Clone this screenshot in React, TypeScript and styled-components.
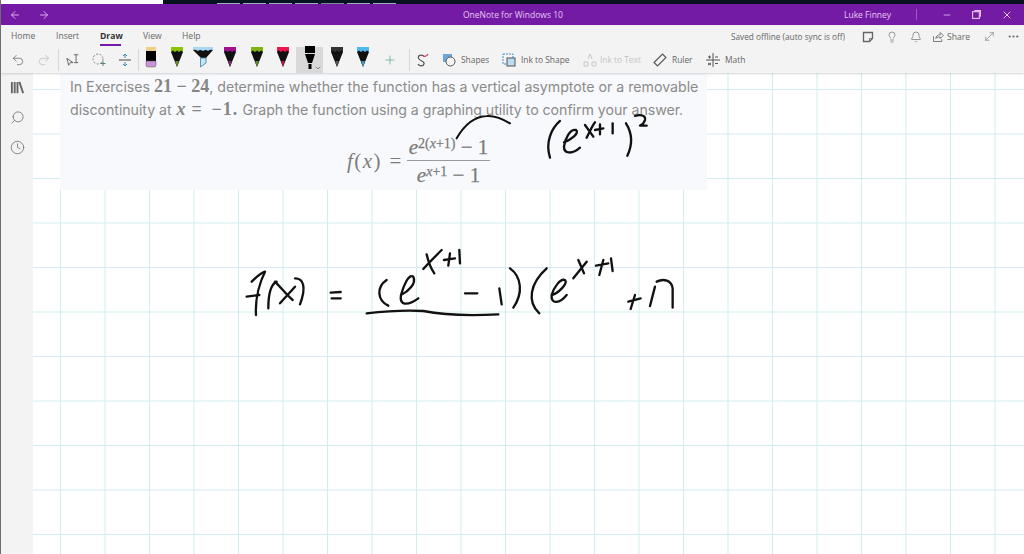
import React from "react";
import styled, { createGlobalStyle } from "styled-components";
import { ArrowLeft, ArrowRight, Undo2, Redo2, Plus, Minus, X, Lightbulb, Bell, Search, Clock, MoveDiagonal, Ellipsis, ChevronDown } from "lucide-react";

const Global = createGlobalStyle`
  html, body { margin: 0; padding: 0; background: #fff; }
  body { font-family: "Open Sans", "Liberation Sans", sans-serif; overflow: hidden; }
  #root { width: 1024px; height: 554px; }
`;
const Page = styled.div`
  width: 1024px; height: 554px; display: flex; flex-direction: column; overflow: hidden;
  border-left: 1px solid #6e6e6e; box-sizing: border-box;
`;
const TopStrip = styled.div`
  height: 4px; flex: none; display: flex; background: #fff;
`;
const DesktopBand = styled.div`
  margin-left: 162px; flex: 1; background: #06131f; display: flex; gap: 3px; padding-left: 54px;
`;
const DesktopTab = styled.span<{ $on?: boolean }>`
  width: 23px; height: 1px; margin-top: 3px; background: ${p => (p.$on ? "#7d8794" : "#9fb0c0")};
`;
const TitleBar = styled.div`
  height: 21px; flex: none; background: #741ba6; display: flex; align-items: center; color: #e6c9f2;
  font-size: 8.5px; position: relative;
`;
const NavArrows = styled.div`
  display: flex; gap: 17px; padding-left: 8px; width: 462px; box-sizing: border-box; color: #d9a9ee;
`;
const AppTitle = styled.div`
  width: 381px; white-space: nowrap;
`;
const UserName = styled.div`
  width: 72px; white-space: nowrap;
`;
const WinDivider = styled.span`
  width: 1px; height: 11px; background: #9a5cc0;
`;
const WinButtons = styled.div`
  display: flex; margin-left: 25px; gap: 20px; color: #e3c1f0; align-items: center;
`;
const Ribbon = styled.div`
  flex: none; height: 48px; background: #f3f3f3; box-shadow: 0 1px 2px rgba(0,0,0,.16); position: relative; z-index: 3;
  display: flex; flex-direction: column;
`;
const TabRow = styled.div`
  height: 21px; display: flex; align-items: flex-start; padding-left: 10px; position: relative;
`;
const Tab = styled.div<{ $active?: boolean; $w: number }>`
  width: ${p => p.$w}px; font-size: 8.6px; line-height: 11px; padding-top: 6px; height: 21px; box-sizing: border-box;
  color: ${p => (p.$active ? "#333" : "#666")}; font-weight: ${p => (p.$active ? 700 : 400)}; position: relative;
  white-space: nowrap;
  &::after {
    content: ""; position: absolute; left: 0; bottom: 0; width: 21px; height: 2px;
    background: ${p => (p.$active ? "#741ba6" : "transparent")};
  }
`;
const RightTools = styled.div`
  margin-left: auto; display: flex; align-items: center; color: #666; font-size: 8.6px; height: 21px; padding-top: 1px;
`;
const SavedLabel = styled.span`
  width: 131px; white-space: nowrap; font-size: 8.25px;
`;
const RightIcon = styled.span<{ $w: number }>`
  width: ${p => p.$w}px; display: flex; justify-content: flex-start; align-items: center; gap: 3px;
`;
const ToolRow = styled.div`
  height: 27px; display: flex; align-items: center; padding-left: 6px;
`;
const Slot = styled.div<{ $w: number; $selected?: boolean; $muted?: boolean }>`
  width: ${p => p.$w}px; height: 26px; flex: none; display: flex; align-items: center; justify-content: center;
  background: ${p => (p.$selected ? "#d9d9d9" : "transparent")}; position: relative;
  color: ${p => (p.$muted ? "#bdbdbd" : "#666")};
`;
const Divider = styled.span`
  width: 1px; height: 22px; background: #d6d6d6; flex: none;
`;
const Labeled = styled.div<{ $w: number; $gap?: number; $muted?: boolean }>`
  width: ${p => p.$w}px; flex: none; display: flex; align-items: center; gap: ${p => p.$gap ?? 5}px; font-size: 8.4px; white-space: nowrap;
  color: ${p => (p.$muted ? "#c4c4c4" : "#666")};
`;
const ChevronBadge = styled.span`
  position: absolute; right: 1px; bottom: 1px; display: flex; color: #555;
`;
const PenSvg = styled.svg`
  margin-bottom: 4px;
`;
const Main = styled.div`
  flex: 1; display: flex; min-height: 0;
`;
const Sidebar = styled.div`
  width: 32px; flex: none; background: #f3f3f3; display: flex; flex-direction: column; align-items: center;
  gap: 15px; padding-top: 7px; color: #666; box-sizing: border-box; z-index: 2;
`;
const MirrorSearch = styled(Search)`
  transform: scaleX(-1);
`;
const Canvas = styled.div`
  flex: 1; position: relative; overflow: hidden;
  background-color: #fff;
  background-image:
    linear-gradient(to right, #d3ecf1 1px, transparent 1px),
    linear-gradient(to bottom, #d3ecf1 1px, transparent 1px);
  background-size: 44.5px 44.5px;
  background-position: 27px 16px;
`;
const Problem = styled.div`
  position: absolute; left: 27px; top: 0; width: 647px; height: 117px; background: #f8f9fc;
  color: #8b8b8b; font-family: Inter, Roboto, sans-serif; font-size: 14.2px; box-sizing: border-box; padding: 2px 0 0 10px;
`;
const Line = styled.div<{ $spacing?: string }>`
  line-height: 23px; height: 23px; white-space: nowrap; letter-spacing: ${p => p.$spacing ?? "0"};
`;
const M = styled.span`
  font-family: "Liberation Serif", serif; font-size: 18px; font-weight: 700; color: #858585;
`;
const EqualsRun = styled(M)`
  word-spacing: 3px; letter-spacing: 1.1px; margin-left: 2px;
`;
const MI = styled(M)`
  font-style: italic; margin-left: 1px;
`;
const Formula = styled.div`
  display: flex; align-items: center; gap: 3px; margin-top: 14px; padding-left: 277px;
  font-family: "Liberation Serif", serif; font-size: 21px; color: #7c7c7c; white-space: nowrap;
`;
const Lhs = styled.span`
  letter-spacing: 1.4px; word-spacing: 1px;
`;
const Fraction = styled.div`
  display: flex; flex-direction: column; align-items: center; margin-left: 1px; -webkit-text-stroke: 0.25px #7c7c7c;
`;
const Numer = styled.div`
  padding: 0 2px 1px; border-bottom: 1px solid #9a9a9a; line-height: 24px; white-space: nowrap;
`;
const Denom = styled.div`
  padding-top: 2px; line-height: 24px; white-space: nowrap;
`;
const Sup = styled.sup`
  font-size: 14px; line-height: 0; vertical-align: 6px;
`;
const Ink = styled.svg`
  position: absolute; left: -33px; top: -73px; width: 1024px; height: 554px; pointer-events: none;
  fill: none; stroke: #111; stroke-linecap: round; stroke-linejoin: round;
`;

function Pen({ cap, tip, wide, flat }: { cap: string; tip: string; wide?: boolean; flat?: boolean }) {
  if (flat) {
    return (
      <PenSvg width="12" height="21" viewBox="0 0 12 21">
        <rect x="1" y="0" width="10" height="4" fill={cap} />
        <rect x="1" y="4" width="10" height="11" fill="#000" />
        <path d="M1 14h10v4q0 2-2 2H3q-2 0-2-2z" fill={tip} stroke="#555" strokeWidth=".5" />
      </PenSvg>
    );
  }
  if (wide) {
    return (
      <PenSvg width="20" height="21" viewBox="0 0 20 21">
        <path d="M0 0h20v3l-7 8v5l-5 2v-7L0 3z" fill="#111" />
        <path d="M0 0h20v3q-3-1-5 1-2-2-5 0-3-2-5 0-3-2-5-1z" fill={cap} />
        <path d="M7.500 11h5.500v5l-5.500 4z" fill="#c6e6f7" stroke="#3d7ea8" strokeWidth=".8" />
      </PenSvg>
    );
  }
  return (
    <PenSvg width="12" height="21" viewBox="0 0 12 21">
      <path d="M0 0h12v5L8 15l-2 5-2-5L0 5z" fill="#111" />
      <path d="M0 0h12v5l-2-1.500-2 1.500-2-1.500-2 1.500-2-1.500-2 1.500z" fill={cap} />
      <path d="M4.200 14h3.600L6 20z" fill={tip} />
    </PenSvg>
  );
}
const SelectedPen = () => (
  <PenSvg width="12" height="24" viewBox="0 0 12 24">
    <path d="M1 0h10v7H1zM1 8h10L8 17H4z" fill="#000" />
    <path d="M4.500 18h3v5h-3z" fill="#000" />
  </PenSvg>
);
const Sv = ({ w = 14, h = 14, children }: { w?: number; h?: number; children: React.ReactNode }) => (
  <svg width={w} height={h} viewBox="0 0 16 16" fill="none" stroke="currentColor" strokeWidth="1.1">{children}</svg>
);

export default function App() {
  return (
    <>
      <Global />
      <Page>
        <TopStrip>
          <DesktopBand>
            {[0, 1, 2, 3, 4, 5, 6].map(i => <DesktopTab key={i} $on={i === 4} />)}
          </DesktopBand>
        </TopStrip>
        <TitleBar>
          <NavArrows>
            <ArrowLeft size={12} />
            <ArrowRight size={12} />
          </NavArrows>
          <AppTitle>OneNote for Windows 10</AppTitle>
          <UserName>Luke Finney</UserName>
          <WinDivider />
          <WinButtons>
            <Minus size={10} />
            <Sv w={9} h={9}><rect x="1" y="3" width="12" height="12" strokeWidth="2" /><path d="M4 1h11v11" strokeWidth="2" /></Sv>
            <X size={12} />
          </WinButtons>
        </TitleBar>
        <Ribbon>
          <TabRow>
            <Tab $w={45}>Home</Tab>
            <Tab $w={44}>Insert</Tab>
            <Tab $w={43} $active>Draw</Tab>
            <Tab $w={39}>View</Tab>
            <Tab $w={60}>Help</Tab>
            <RightTools>
              <SavedLabel>Saved offline (auto sync is off)</SavedLabel>
              <RightIcon $w={24}><Sv w={12} h={12}><path d="M2 2h12v8l-4 4H2z" strokeWidth="1.8" /><path d="M10 14v-4h4" /></Sv></RightIcon>
              <RightIcon $w={24}><Lightbulb size={12} strokeWidth={1.3} /></RightIcon>
              <RightIcon $w={22}><Bell size={12} strokeWidth={1.3} /></RightIcon>
              <RightIcon $w={51}>
                <Sv w={12} h={12}><path d="M2 7v7h11v-3M5 10c0-3 3-5 6-5V2l4 4-4 4V8c-2 0-4 0-6 2z" /></Sv>
                Share
              </RightIcon>
              <RightIcon $w={24}><MoveDiagonal size={13} strokeWidth={1} /></RightIcon>
              <RightIcon $w={17}><Ellipsis size={13} /></RightIcon>
            </RightTools>
          </TabRow>
          <ToolRow>
            <Slot $w={22}><Undo2 size={14} strokeWidth={1.3} /></Slot>
            <Slot $w={29} $muted><Redo2 size={14} strokeWidth={1.3} /></Slot>
            <Divider />
            <Slot $w={27}>
              <Sv w={16} h={14}><path d="M1 6l2 8 2-3 3 0z" /><path d="M9 2h5M11.500 2v9M9 11h5" /></Sv>
            </Slot>
            <Slot $w={26}>
              <svg width="16" height="14" viewBox="0 0 16 14" fill="none" stroke="#888"><circle cx="7" cy="6" r="5" strokeDasharray="2 1.500" /><path d="M12 8v5M9.500 10.500h5" stroke="#4a8a7a" /></svg>
            </Slot>
            <Slot $w={26}>
              <svg width="14" height="14" viewBox="0 0 14 14" fill="none" stroke="#3a8ab5"><path d="M1 7h12" stroke="#777" strokeWidth="1.400" /><path d="M7 1v4M5 3l2-2 2 2M7 13V9M5 11l2 2 2-2" /></svg>
            </Slot>
            <Divider />
            <Slot $w={24}><Pen cap="#f0cd8f" tip="#c893d8" flat /></Slot>
            <Slot $w={27}><Pen cap="#8bc30a" tip="#6b8f2a" /></Slot>
            <Slot $w={26}><Pen cap="#a8d8f5" tip="#c6e6f7" wide /></Slot>
            <Slot $w={27}><Pen cap="#a3108f" tip="#7a2a72" /></Slot>
            <Slot $w={27}><Pen cap="#7fb414" tip="#5f8a2a" /></Slot>
            <Slot $w={26}><Pen cap="#e8174f" tip="#b51a44" /></Slot>
            <Slot $w={27} $selected>
              <SelectedPen />
              <ChevronBadge><ChevronDown size={8} strokeWidth={2} /></ChevronBadge>
            </Slot>
            <Slot $w={27}><Pen cap="#333" tip="#555" /></Slot>
            <Slot $w={26}><Pen cap="#4fb8ec" tip="#3a9cc8" /></Slot>
            <Slot $w={27}><Plus size={14} strokeWidth={1} color="#3f9c6d" /></Slot>
            <Slot $w={6} />
            <Divider />
            <Slot $w={24}>
              <svg width="14" height="15" viewBox="0 0 14 15" fill="none" stroke="#555" strokeWidth="1.200"><path d="M9 4C5 2 2 4 4 7s6 2 5 5-5 2-6 0" /><path d="M8 4c2 1 4 0 5-2" stroke="#d2405a" /></svg>
            </Slot>
            <Slot $w={8} />
            <Labeled $w={60}>
              <svg width="14" height="14" viewBox="0 0 14 14"><rect x="1" y="1" width="9" height="8" fill="#6ca6dc" /><circle cx="8.500" cy="8.500" r="4.500" fill="#f3f3f3" stroke="#555" /></svg>
              Shapes
            </Labeled>
            <Labeled $w={81}>
              <svg width="14" height="14" viewBox="0 0 14 14" fill="none"><rect x="1" y="1" width="10" height="10" stroke="#3e8fc9" strokeDasharray="2 1" /><rect x="5" y="5" width="8" height="8" stroke="#555" fill="#bcdcf2" /></svg>
              Ink to Shape
            </Labeled>
            <Labeled $w={70} $gap={3} $muted>
              <svg width="14" height="14" viewBox="0 0 14 14" fill="none" stroke="#c8c8c8"><path d="M7 1l-2 5M7 1l2 5M1 9h4v4H1zM9 9h4v4H9z" /></svg>
              Ink to Text
            </Labeled>
            <Labeled $w={53}>
              <svg width="14" height="14" viewBox="0 0 14 14" fill="none" stroke="#555" strokeWidth="1.100"><path d="M1 9.500L9.500 1 13 4.500 4.500 13z" /></svg>
              Ruler
            </Labeled>
            <Labeled $w={45}>
              <svg width="14" height="14" viewBox="0 0 14 14" fill="none" stroke="#555"><path d="M0 7h14M7 0v14M2 4h3M3.500 2.500v3M9 4h3M2 10l3 2M5 10l-3 2M9 10.500h3" /></svg>
              Math
            </Labeled>
          </ToolRow>
        </Ribbon>
        <Main>
          <Sidebar>
            <Sv w={15} h={15}><path d="M2 2v12M5 2v12M8 2v12M10 2l4 12" strokeWidth="2" /></Sv>
            <MirrorSearch size={15} strokeWidth={1.2} />
            <Clock size={15} strokeWidth={1.2} />
          </Sidebar>
          <Canvas>
            <Problem>
              <Line $spacing="-0.02px">In Exercises <M>21 − 24</M>, determine whether the function has a vertical asymptote or a removable</Line>
              <Line $spacing="-0.05px">discontinuity at <MI>x</MI> <EqualsRun>= −1.</EqualsRun> Graph the function using a graphing utility to confirm your answer.</Line>
              <Formula>
                <Lhs><i>f</i>(<i>x</i>) =</Lhs>
                <Fraction>
                  <Numer><i>e</i><Sup>2(<i>x</i>+1)</Sup> − 1</Numer>
                  <Denom><i>e</i><Sup><i>x</i>+1</Sup> − 1</Denom>
                </Fraction>
              </Formula>
            </Problem>
            <Ink viewBox="0 0 1024 554">
              <g transform="translate(330 100) scale(.3333)" strokeWidth="6">
                <path d="M380 115C400 80 430 50 470 48C495 46 520 58 540 70" />
              </g>
              <g transform="translate(540 105) scale(.3333)" strokeWidth="7">
                <path d="M60 48C35 70 15 110 30 158" />
                <path d="M72 112C90 105 120 85 108 75C90 72 75 100 72 125C72 145 95 150 120 128" />
                <path d="M140 98C150 80 155 65 165 52M135 60L160 95" />
                <path d="M165 75L190 70M180 58L180 88" />
                <path d="M218 55L218 85" />
                <path d="M258 55C280 90 275 125 262 152" />
                <path d="M285 33C300 28 318 30 315 45C312 55 305 60 300 62L320 62" />
              </g>
              <g transform="translate(240 245) scale(.3333)" strokeWidth="7">
                <path d="M35 110C45 100 60 85 75 80C60 110 45 160 48 210M20 155L58 150" />
                <path d="M85 190C85 160 88 120 110 110" />
                <path d="M105 110C125 130 140 150 158 165M165 125L120 175" />
                <path d="M165 100C190 100 200 125 180 178" />
                <path d="M272 143L302 141M275 160L302 160" />
                <path d="M440 105C410 125 410 165 445 182" />
                <path d="M483 150C505 140 530 115 520 95C505 85 490 125 483 150C478 180 500 185 535 160" />
                <path d="M550 72C565 55 585 35 605 15M560 28C565 50 572 70 583 85" />
                <path d="M612 45L645 40M630 25L625 62" />
                <path d="M658 15L660 55" />
                <path d="M675 145L712 145" />
                <path d="M380 205C440 198 500 195 550 198C620 212 700 212 775 208" />
              </g>
              <g transform="translate(480 245) scale(.3333)" strokeWidth="7">
                <path d="M58 130L65 178" />
                <path d="M90 70C125 95 130 145 100 188" />
                <path d="M200 70C150 115 140 170 178 205" />
                <path d="M215 150C235 145 265 115 255 105C240 100 220 130 215 150C212 180 240 175 260 150" />
                <path d="M280 100L320 50M295 45L312 85" />
                <path d="M348 62L385 55M370 45L358 90" />
                <path d="M393 40L398 78" />
                <path d="M445 170L482 160M465 150L452 192" />
                <path d="M525 125L510 183" />
                <path d="M530 110C550 100 575 105 578 130L578 188" />
              </g>
            </Ink>
          </Canvas>
        </Main>
      </Page>
    </>
  );
}
